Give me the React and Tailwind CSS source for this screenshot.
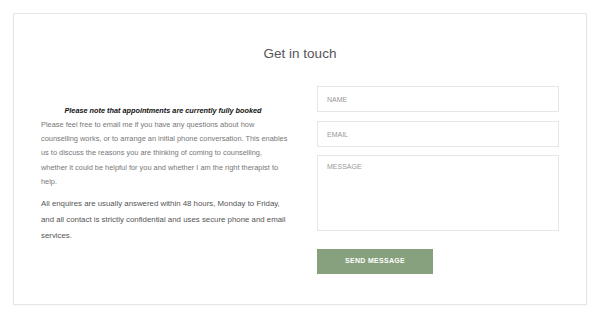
export default function App() {
  const p1 = [
    "Please feel free to email me if you have any questions about how",
    "counselling works, or to arrange an initial phone conversation. This enables",
    "us to discuss the reasons you are thinking of coming to counselling,",
    "whether it could be helpful for you and whether I am the right therapist to",
    "help.",
  ];
  const p2 = [
    "All enquires are usually answered within 48 hours, Monday to Friday,",
    "and all contact is strictly confidential and uses secure phone and email",
    "services.",
  ];
  return (
    <div className="w-[600px] h-[333px] bg-white p-[13px]" style={{ fontFamily: '"Liberation Sans", Arial, sans-serif' }}>
      <div className="w-[574px] h-[292px] border border-[#e6e6e6] shadow-[0_1px_2px_rgba(0,0,0,0.04)]">
        <h2 className="pt-[31px] text-center text-[13.5px] leading-[18px] text-[#555]">Get in touch</h2>
        <div className="mt-[23px] flex pl-[27px] gap-[32px]">
          <div className="w-[244px] pt-[18px]">
            <p className="text-center text-[7.3px] leading-[14px] font-bold italic text-[#111]">
              Please note that appointments are currently fully booked
            </p>
            <p className="text-[7.4px] leading-[14.2px] text-[#777] whitespace-nowrap">
              {p1.map((l, i) => (
                <span key={i} className="block">{l}</span>
              ))}
            </p>
            <p className="mt-[7px] text-[7.85px] leading-[16px] text-[#555] whitespace-nowrap">
              {p2.map((l, i) => (
                <span key={i} className="block">{l}</span>
              ))}
            </p>
          </div>
          <div className="w-[242px] flex flex-col">
            <input
              placeholder="NAME"
              className="h-[26px] border border-[#e6e6e6] px-[9px] text-[7px] text-[#555] placeholder:text-[#999] outline-none"
            />
            <input
              placeholder="EMAIL"
              className="mt-[9px] h-[26px] border border-[#e6e6e6] px-[9px] text-[7px] text-[#555] placeholder:text-[#999] outline-none"
            />
            <textarea
              placeholder="MESSAGE"
              className="mt-[8px] h-[76px] resize-none border border-[#e6e6e6] px-[9px] pt-[6px] text-[7px] text-[#555] placeholder:text-[#999] outline-none"
            />
            <button className="mt-[18px] w-[116px] h-[25px] bg-[#87a07e] text-white text-[7px] font-bold tracking-[0.3px]">
              SEND MESSAGE
            </button>
          </div>
        </div>
      </div>
    </div>
  );
}
